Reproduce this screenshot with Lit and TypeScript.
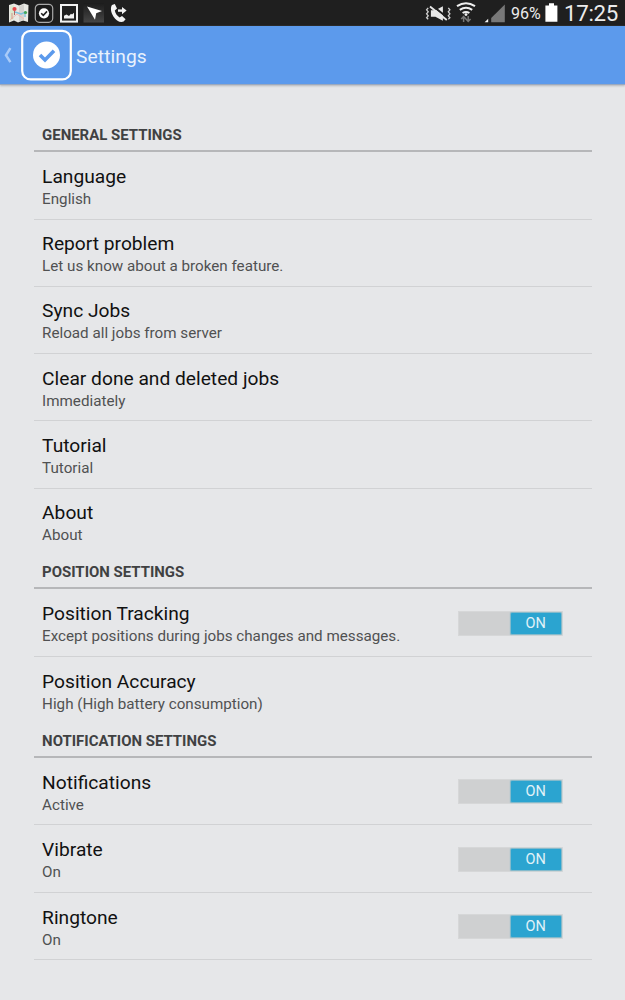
import { LitElement, html, css } from "lit";
import { customElement, property } from "lit/decorators.js";

@customElement("status-bar")
class StatusBar extends LitElement {
  static styles = css`
    :host { display: flex; height: 26px; background: #1f1f1f; color: #ececec; justify-content: space-between; }
    svg { display: block; flex: none; }
    .right { display: flex; }
    .pct { font-size: 16px; line-height: 28px; width: 34px; white-space: nowrap; }
    .clock { font-size: 22.3px; line-height: 26px; width: 61px; white-space: nowrap; letter-spacing: -0.3px; }
  `;
  render() {
    return html`
      <svg width="135" height="26" viewBox="0 0 135 26">
        <path d="M9 5 L14 3.5 L19 5.5 L24 3.5 L28.5 5 L28 22 L23 20.5 L18 22.5 L14 20.5 L9 22.5 Z" fill="#e9e9e4" />
        <path d="M10 6 L14 5 V19 L10 21 Z" fill="#dce8cf" />
        <path d="M19 6 L24 4.5 V20 L19 21.5 Z" fill="#d5d3cf" />
        <path d="M10 20 L17 14 L24 19" stroke="#f0b5b0" stroke-width="1" fill="none" />
        <path d="M15 12 L21 14 L26 12 M25 11 V17" stroke="#7ec0dc" stroke-width="1.4" fill="none" />
        <path d="M12 13 V19" stroke="#d8928a" stroke-width="1" />
        <circle cx="14.5" cy="9" r="2.1" fill="#e5484c" /><path d="M14.5 11 V15" stroke="#a66" />
        <circle cx="25.5" cy="12.5" r="1.6" fill="#45a657" />
        <rect x="35.3" y="4.3" width="17.4" height="18" rx="4" fill="#1b1b1b" stroke="#a9a9a9" stroke-width="1.2" />
        <circle cx="44" cy="13.3" r="5.1" fill="#fff" />
        <path d="M41.2 13.2 L43.3 15.3 L47 11.4" stroke="#222" stroke-width="1.6" fill="none" />
        <rect x="61" y="5" width="16" height="16.6" fill="#202020" stroke="#f2f2f2" stroke-width="2" />
        <path d="M64 18.5 V15.8 L66.5 14.5 L69 16 L71 13.8 L72 14.4 L74 12.8 V18.5 Z" fill="#f2f2f2" />
        <defs><linearGradient id="tile" x2="0" y2="1"><stop stop-color="#1c1c1c" /><stop offset="1" stop-color="#464646" /></linearGradient></defs>
        <rect x="83.5" y="3" width="20.5" height="19.5" fill="url(#tile)" />
        <path d="M87 6.5 L102 11 L96.2 13.3 L95 19.8 Z" fill="#fff" />
        <path d="M112 5 L114.8 4 L117 8.6 L114.8 10.6 C115.3 13.4 117 16 119.6 17.4 L122 16 L125.6 19.2 L123.6 21.6 C120 23 116 20.4 113.4 16.4 C110.8 12.4 110.2 7.6 112 5 Z" fill="#f5f5f5" />
        <path d="M118 10.6 H123" stroke="#f5f5f5" stroke-width="2.4" /><path d="M122 7 L126.6 10.6 L122 14.2 Z" fill="#f5f5f5" />
      </svg>
      <div class="right">
        <svg width="86" height="26" viewBox="425 0 86 26">
          <g transform="translate(-.6 .3)">
            <path d="M431.5 10 H436 L443.5 6 V20.5 L436 16.4 H431.5 Z" fill="#e8e8e8" />
            <path d="M432 4.6 L449 18.2" stroke="#1f1f1f" stroke-width="2" />
            <path d="M430.6 6.2 L447.4 19.6" stroke="#e8e8e8" stroke-width="1.9" />
            <path d="M428.8 7.5 L427.2 9.5 L428.8 11.5 L427.2 13.5 L428.8 15.5 L427.2 17.5 L428.8 19 M448.9 7.5 L450.5 9.5 L448.9 11.5 L450.5 13.5 L448.9 15.5 L450.5 17.5 L448.9 19" fill="none" stroke="#d0d0d0" stroke-width="1.3" />
          </g>
          <g fill="none" stroke="#efefef" stroke-width="2"><path d="M457 6.2 Q466 .2 475 6.2" /><path d="M459.8 9.8 Q466 5.6 472.2 9.8" /><path d="M462.6 13 Q466 10.8 469.4 13" /></g>
          <circle cx="466" cy="14.6" r="1.4" fill="#efefef" />
          <g stroke="#777" stroke-width="1.5" fill="none"><path d="M463.6 22 V16.8 M461.2 19 L463.6 16.6 L466 19 M468.2 16 V21 M465.9 19 L468.2 21.4 L470.6 19" /></g>
          <path d="M504.8 4.5 V22.3 H491.2 V18 Z" fill="#787878" />
          <path d="M488.2 18.8 V22.3 H484.6 Z" fill="#f5f5f5" />
        </svg>
        <div class="pct">96%</div>
        <svg width="19" height="26" viewBox="0 0 19 26"><path d="M4 3.3 H9 V5.4 H12.4 V21.8 H.4 V5.4 H4 Z" fill="#fff" /></svg>
        <div class="clock">17:25</div>
      </div>
    `;
  }
}

@customElement("on-switch")
class OnSwitch extends LitElement {
  static styles = css`
    :host { display: flex; justify-content: flex-end; box-sizing: border-box; width: 105px; height: 25px; padding: 1px; background: #cfd0d1; border: 1px solid #d6d7d8; }
    .thumb { width: 50px; background: #2ba4d0; color: #e2f2f8; font-size: 14.5px; line-height: 22px; text-align: center; border-radius: 1px; box-shadow: 0 0 1px 0.5px #7ab7cb; }
  `;
  render() {
    return html`<div class="thumb">ON</div>`;
  }
}

@customElement("setting-row")
class SettingRow extends LitElement {
  @property() label = "";
  @property() note = "";
  @property({ type: Boolean, reflect: true }) toggle = false;
  @property({ type: Boolean, reflect: true }) last = false;
  static styles = css`
    :host { display: flex; align-items: center; justify-content: space-between; box-sizing: border-box; height: 67.25px; padding: 1px 29px 0 8.5px; border-bottom: 1px solid #d1d2d4; }
    :host([toggle]) { height: 67.5px; }
    :host([last]) { border-color: transparent; }
    .text { padding-top: 3px; white-space: nowrap; }
    .label { font-size: 19.2px; line-height: 24px; color: #111; }
    .note { font-size: 15.2px; line-height: 21px; color: #505152; }
  `;
  render() {
    return html`<div class="text"><div class="label">${this.label}</div><div class="note">${this.note}</div></div>
      ${this.toggle ? html`<on-switch></on-switch>` : ""}`;
  }
}

type Row = [string, string, boolean?];
const sections: { title: string; rows: Row[] }[] = [
  { title: "GENERAL SETTINGS", rows: [
    ["Language", "English"],
    ["Report problem", "Let us know about a broken feature."],
    ["Sync Jobs", "Reload all jobs from server"],
    ["Clear done and deleted jobs", "Immediately"],
    ["Tutorial", "Tutorial"],
    ["About", "About"],
  ] },
  { title: "POSITION SETTINGS", rows: [
    ["Position Tracking", "Except positions during jobs changes and messages.", true],
    ["Position Accuracy", "High (High battery consumption)"],
  ] },
  { title: "NOTIFICATION SETTINGS", rows: [
    ["Notifications", "Active", true],
    ["Vibrate", "On", true],
    ["Ringtone", "On", true],
  ] },
];

@customElement("app-root")
class AppRoot extends LitElement {
  static styles = css`
    :host { display: block; height: 1000px; overflow: hidden; background: #e6e7e9; font-family: Roboto, sans-serif; }
    .bar { display: flex; align-items: center; height: 58px; background: #5c9aec; border-bottom: 1px solid #9aa9bf; box-shadow: 0 1px 2px #b4b6ba; color: #e9f2fd; }
    .bar svg { display: block; }
    .title { font-size: 19.2px; letter-spacing: 0.1px; padding: 2px 0 0 4px; }
    .list { padding: 33.57px 33.4px 0 33.6px; }
    .head { box-sizing: border-box; height: 33.7px; padding: 6.4px 8.5px 0; font-size: 14.95px; line-height: 20px; font-weight: 700; color: #404142; border-bottom: 2px solid #b6b7b9; }
  `;
  render() {
    return html`
      <status-bar></status-bar>
      <div class="bar">
        <svg width="72" height="58" viewBox="0 26 72 58">
          <path d="M10.4 48.2 L6 55.2 L10.4 62.2" fill="none" stroke="#a9cbf8" stroke-width="2.5" />
          <rect x="22.2" y="30.8" width="48.6" height="48.6" rx="8.5" fill="none" stroke="#fff" stroke-width="2.2" />
          <circle cx="46.5" cy="55" r="13.5" fill="#fff" />
          <path d="M40 55 L45 60 L54 50.8" fill="none" stroke="#5c9aec" stroke-width="3.6" />
        </svg>
        <div class="title">Settings</div>
      </div>
      <div class="list">
        ${sections.map((s, si) => html`
          <div class="head">${s.title}</div>
          ${s.rows.map((r, i) => html`<setting-row .label=${r[0]} .note=${r[1]} .toggle=${!!r[2]}
            .last=${i === s.rows.length - 1 && si < sections.length - 1}></setting-row>`)}
        `)}
      </div>
    `;
  }
}
